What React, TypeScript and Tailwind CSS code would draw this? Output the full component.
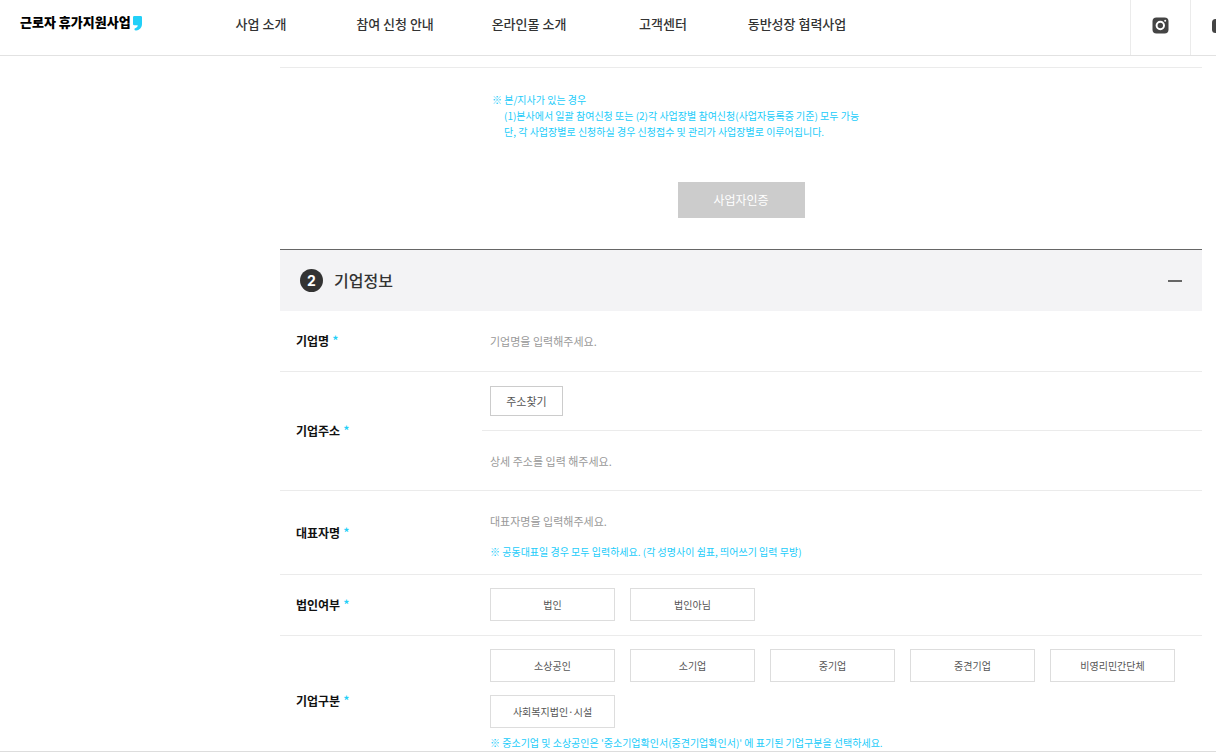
import type { ReactNode } from "react";

const menu = ["사업 소개", "참여 신청 안내", "온라인몰 소개", "고객센터", "동반성장 협력사업"];

const companyTypes = [
  "소상공인",
  "소기업",
  "중기업",
  "중견기업",
  "비영리민간단체",
  "사회복지법인·시설",
];

function InstagramIcon() {
  return (
    <svg viewBox="0 0 17 17" className="size-[17px]" aria-hidden="true">
      <rect x="0.5" y="0.5" width="16" height="16" rx="4" fill="#444" />
      <circle cx="8.3" cy="8.5" r="3.7" fill="none" stroke="#fff" strokeWidth="2" />
      <circle cx="13.2" cy="3.7" r="1" fill="#fff" />
    </svg>
  );
}

function YoutubeIcon() {
  return (
    <svg viewBox="0 0 18 14" className="h-[14px] w-[18px]" aria-hidden="true">
      <rect width="18" height="14" rx="3.5" fill="#444" />
      <path d="M7 4l5 3-5 3z" fill="#fff" />
    </svg>
  );
}

function Star() {
  return <span className="ml-[3px] text-[13px] font-medium text-[#22d0f8]">*</span>;
}

function Note({ children }: { children: ReactNode }) {
  return <p className="text-[10px] leading-4 text-[#22ccfa]">{children}</p>;
}

function Row({
  label,
  htmlFor,
  labelClass = "",
  last = false,
  children,
}: {
  label: string;
  htmlFor?: string;
  labelClass?: string;
  last?: boolean;
  children: ReactNode;
}) {
  const text = (
    <>
      {label}
      <Star />
    </>
  );
  const cls = "text-xs leading-4 font-bold text-[#111]";
  return (
    <div className={last ? "flex" : "flex border-b border-[#ebebeb]"}>
      <div className={`flex w-[202px] shrink-0 items-center pl-4 ${labelClass}`}>
        {htmlFor ? (
          <label htmlFor={htmlFor} className={cls}>
            {text}
          </label>
        ) : (
          <span className={cls}>{text}</span>
        )}
      </div>
      <div className="min-w-0 flex-1">{children}</div>
    </div>
  );
}

function TextField({ id, placeholder }: { id: string; placeholder: string }) {
  return (
    <input
      id={id}
      type="text"
      placeholder={placeholder}
      className="block h-8 w-full bg-transparent text-[11px] text-[#333] outline-none placeholder:text-[#999]"
    />
  );
}

function Options({ name, items }: { name: string; items: string[] }) {
  return (
    <div
      role="radiogroup"
      aria-label={name}
      className="grid grid-cols-[repeat(auto-fill,125px)] gap-x-[15px] gap-y-[13px]"
    >
      {items.map((item) => (
        <label
          key={item}
          className="relative flex h-[33px] cursor-pointer items-center justify-center border border-[#ddd] text-[10px] text-[#555] has-checked:border-[#22d0f8]"
        >
          <input type="radio" name={name} value={item} className="sr-only" />
          {item}
        </label>
      ))}
    </div>
  );
}

export default function App() {
  return (
    <div className="border-b border-[#ddd] bg-white font-['Noto_Sans_CJK_KR',sans-serif] text-[#333]">
      <header className="flex h-14 overflow-hidden border-b border-[#e2e2e2]">
        <div className="flex w-[194px] shrink-0 pt-3 pl-5">
          <a href="#" className="flex items-start gap-[2px] text-[13px] leading-5 font-black text-black">
            근로자 휴가지원사업
            <svg viewBox="0 0 9 15" className="mt-1 h-[15px] w-[9px]" aria-hidden="true">
              <path
                d="M1.3 0H7.7Q9 0 9 1.3V7.5C9 11.5 7 14 3.2 14.5Q1.5 14.6 1.4 13.3Q1.4 12.2 2.6 11.9C4 11.5 4.6 10.6 4.7 9.2H1.3Q0 9.2 0 7.9V1.3Q0 0 1.3 0Z"
                fill="#22d0f8"
              />
            </svg>
          </a>
        </div>
        <nav className="grid shrink-0 grid-cols-[repeat(5,134px)] pb-2">
          {menu.map((item) => (
            <a
              key={item}
              href="#"
              className="flex items-center justify-center text-[13px] font-medium whitespace-nowrap"
            >
              {item}
            </a>
          ))}
        </nav>
        <div className="ml-auto flex w-[86px] shrink-0 overflow-hidden">
          <a
            href="#"
            aria-label="인스타그램"
            className="flex w-[60px] shrink-0 items-center justify-center border-l border-[#ebebeb] pb-[5px]"
          >
            <InstagramIcon />
          </a>
          <a
            href="#"
            aria-label="유튜브"
            className="flex w-[60px] shrink-0 items-center justify-center border-l border-[#ebebeb] pb-[3px]"
          >
            <YoutubeIcon />
          </a>
        </div>
      </header>

      <main className="pt-[11px] pr-[14px] pl-[280px]">
        <section className="border-t border-[#ebebeb] pt-6 pb-[31px]">
          <div className="pl-[212px]">
            <Note>※ 본/지사가 있는 경우</Note>
            <div className="pl-3">
              <Note>
                (1)본사에서 일괄 참여신청 또는 (2)각 사업장별 참여신청(사업자등록증 기준) 모두 가능
              </Note>
              <Note>단, 각 사업장별로 신청하실 경우 신청접수 및 관리가 사업장별로 이루어집니다.</Note>
            </div>
          </div>
          <button
            type="button"
            className="mx-auto mt-[42px] block h-9 w-[127px] bg-[#ccc] text-xs text-white"
          >
            사업자인증
          </button>
        </section>

        <section className="border-t border-[#666]">
          <div className="flex h-[61px] items-center bg-[#f3f3f5] pr-5 pl-5">
            <span className="flex size-[23px] items-center justify-center rounded-full bg-[#333] font-[Inter,sans-serif] text-sm font-bold text-white">
              2
            </span>
            <h2 className="ml-[11px] pb-[2px] text-base font-medium">기업정보</h2>
            <button type="button" aria-label="접기" className="ml-auto flex h-6 w-[14px] items-center">
              <span className="h-[2px] w-full bg-[#666]" />
            </button>
          </div>

          <Row label="기업명" htmlFor="company">
            <div className="px-2 py-[14px]">
              <TextField id="company" placeholder="기업명을 입력해주세요." />
            </div>
          </Row>

          <Row label="기업주소" htmlFor="address">
            <div className="border-b border-[#ebebeb] px-2 py-[14px]">
              <button
                type="button"
                className="block h-[30px] w-[73px] border border-[#ccc] text-[11px] text-[#555]"
              >
                주소찾기
              </button>
            </div>
            <div className="px-2 pt-[14px] pb-[13px]">
              <TextField id="address" placeholder="상세 주소를 입력 해주세요." />
            </div>
          </Row>

          <Row label="대표자명" htmlFor="ceo">
            <div className="px-2 pt-[14px] pb-[14px]">
              <TextField id="ceo" placeholder="대표자명을 입력해주세요." />
              <div className="mt-[7px]">
                <Note>※ 공동대표일 경우 모두 입력하세요. (각 성명사이 쉼표, 띄어쓰기 입력 무방)</Note>
              </div>
            </div>
          </Row>

          <Row label="법인여부">
            <div className="px-2 pt-[13px] pb-[14px]">
              <Options name="법인여부" items={["법인", "법인아님"]} />
            </div>
          </Row>

          <Row label="기업구분" labelClass="pt-[14px]" last>
            <div className="px-2 pt-[13px]">
              <Options name="기업구분" items={companyTypes} />
              <div className="mt-[7px]">
                <Note>
                  ※ 중소기업 및 소상공인은 '중소기업확인서(중견기업확인서)' 에 표기된 기업구분을 선택하세요.
                </Note>
              </div>
            </div>
          </Row>
        </section>
      </main>
    </div>
  );
}
